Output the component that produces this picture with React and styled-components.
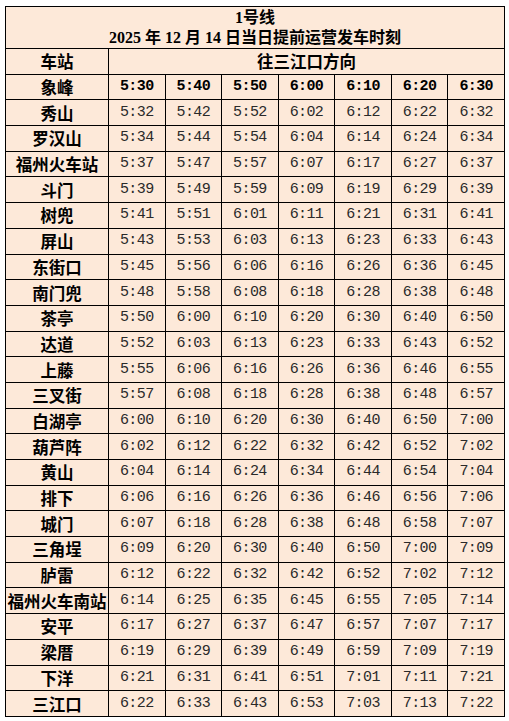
import React from 'react';
import styled, { createGlobalStyle } from 'styled-components';

const GlobalStyle = createGlobalStyle`
  html, body {
    margin: 0;
    padding: 0;
    background: #fff;
  }
`;

const Page = styled.div`
  padding: 6px 4px 4px 5px;
`;

const Table = styled.table`
  width: 500px;
  border-collapse: collapse;
  table-layout: fixed;
  background: #fde9d9;
  color: #000;
`;

const TitleCell = styled.td`
  height: 41px;
  border: 1px solid #000;
  text-align: center;
  padding: 0;
  font-family: "Liberation Serif", "Noto Sans CJK SC", serif;
  font-weight: 700;
  font-size: 16px;
  line-height: 20px;
`;

const Row = styled.tr`
  height: 25.7px;
`;

const StationCell = styled.td`
  border: 1px solid #000;
  padding: 0;
  text-align: center;
  font-family: "Noto Sans CJK SC", sans-serif;
  font-weight: 700;
  font-size: 16.5px;
  line-height: 24px;
  white-space: nowrap;
  overflow: hidden;
`;

const DirectionCell = styled(StationCell)``;

const TimeCell = styled.td`
  border: 1px solid #000;
  padding: 0;
  text-align: center;
  font-family: "Liberation Mono", "DejaVu Sans Mono", monospace;
  font-size: 15px;
  letter-spacing: -0.6px;
  font-weight: ${p => (p.$bold ? 700 : 400)};
  color: ${p => (p.$bold ? '#000' : '#2a2a2a')};
  line-height: 24px;
`;

const rows = [
  ['象峰', '5:30', '5:40', '5:50', '6:00', '6:10', '6:20', '6:30'],
  ['秀山', '5:32', '5:42', '5:52', '6:02', '6:12', '6:22', '6:32'],
  ['罗汉山', '5:34', '5:44', '5:54', '6:04', '6:14', '6:24', '6:34'],
  ['福州火车站', '5:37', '5:47', '5:57', '6:07', '6:17', '6:27', '6:37'],
  ['斗门', '5:39', '5:49', '5:59', '6:09', '6:19', '6:29', '6:39'],
  ['树兜', '5:41', '5:51', '6:01', '6:11', '6:21', '6:31', '6:41'],
  ['屏山', '5:43', '5:53', '6:03', '6:13', '6:23', '6:33', '6:43'],
  ['东街口', '5:45', '5:56', '6:06', '6:16', '6:26', '6:36', '6:45'],
  ['南门兜', '5:48', '5:58', '6:08', '6:18', '6:28', '6:38', '6:48'],
  ['茶亭', '5:50', '6:00', '6:10', '6:20', '6:30', '6:40', '6:50'],
  ['达道', '5:52', '6:03', '6:13', '6:23', '6:33', '6:43', '6:52'],
  ['上藤', '5:55', '6:06', '6:16', '6:26', '6:36', '6:46', '6:55'],
  ['三叉街', '5:57', '6:08', '6:18', '6:28', '6:38', '6:48', '6:57'],
  ['白湖亭', '6:00', '6:10', '6:20', '6:30', '6:40', '6:50', '7:00'],
  ['葫芦阵', '6:02', '6:12', '6:22', '6:32', '6:42', '6:52', '7:02'],
  ['黄山', '6:04', '6:14', '6:24', '6:34', '6:44', '6:54', '7:04'],
  ['排下', '6:06', '6:16', '6:26', '6:36', '6:46', '6:56', '7:06'],
  ['城门', '6:07', '6:18', '6:28', '6:38', '6:48', '6:58', '7:07'],
  ['三角埕', '6:09', '6:20', '6:30', '6:40', '6:50', '7:00', '7:09'],
  ['胪雷', '6:12', '6:22', '6:32', '6:42', '6:52', '7:02', '7:12'],
  ['福州火车南站', '6:14', '6:25', '6:35', '6:45', '6:55', '7:05', '7:14'],
  ['安平', '6:17', '6:27', '6:37', '6:47', '6:57', '7:07', '7:17'],
  ['梁厝', '6:19', '6:29', '6:39', '6:49', '6:59', '7:09', '7:19'],
  ['下洋', '6:21', '6:31', '6:41', '6:51', '7:01', '7:11', '7:21'],
  ['三江口', '6:22', '6:33', '6:43', '6:53', '7:03', '7:13', '7:22'],
];

export default function App() {
  return (
    <Page>
      <GlobalStyle />
      <Table>
        <colgroup>
          <col style={{ width: 103 }} />
          {Array.from({ length: 7 }).map((_, i) => (
            <col key={i} />
          ))}
        </colgroup>
        <tbody>
          <tr>
            <TitleCell colSpan={8}>
              1号线
              <br />
              2025 年 12 月 14 日当日提前运营发车时刻
            </TitleCell>
          </tr>
          <Row>
            <StationCell>车站</StationCell>
            <DirectionCell colSpan={7}>往三江口方向</DirectionCell>
          </Row>
          {rows.map((r, i) => (
            <Row key={r[0]}>
              <StationCell>{r[0]}</StationCell>
              {r.slice(1).map((t, j) => (
                <TimeCell key={j} $bold={i === 0}>
                  {t}
                </TimeCell>
              ))}
            </Row>
          ))}
        </tbody>
      </Table>
    </Page>
  );
}
